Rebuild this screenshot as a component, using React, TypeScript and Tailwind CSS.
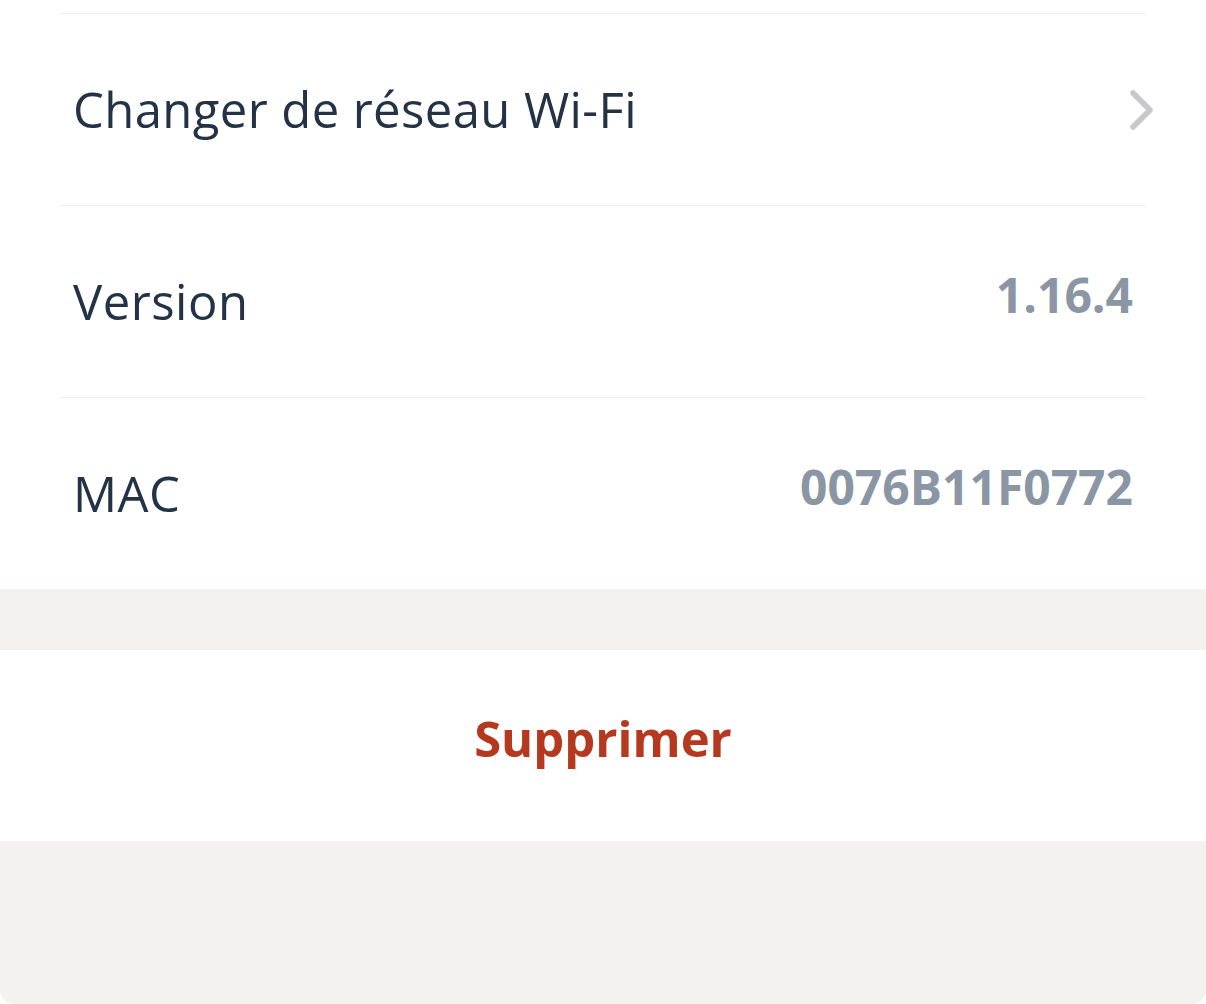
export default function App() {
  const rows = [
    { label: 'Version', value: '1.16.4' },
    { label: 'MAC', value: '0076B11F0772' },
  ]

  return (
    <div className="w-[1206px] h-[1004px] bg-white" style={{ fontFamily: '"Open Sans", "Noto Sans", sans-serif' }}>
      <div className="rounded-b-[14px] overflow-hidden bg-[#f3f2ee]">
        <div className="bg-white pt-[13px]">
          {/* Wi-Fi row */}
          <div className="mx-[60px] h-[192px] border-t border-[#f0f0f0] flex items-center justify-between pl-[13px]">
            <span className="text-[49px] text-[#233345] tracking-[0.4px]">Changer de réseau Wi-Fi</span>
            <svg width="26" height="42" viewBox="0 0 26 42" className="mr-[-9px]">
              <path d="M4 4 L21 21 L4 38" fill="none" stroke="#c8c8cb" strokeWidth="5.5" strokeLinecap="round" strokeLinejoin="round" />
            </svg>
          </div>

          {rows.map((r) => (
            <div key={r.label} className="mx-[60px] h-[192px] border-t border-[#f0f0f0] flex items-center justify-between pl-[13px] pr-[13px]">
              <span className="text-[49px] text-[#233345] tracking-[0.5px]">{r.label}</span>
              <span className="text-[48px] font-bold text-[#8a96a3] -mt-[14px]">{r.value}</span>
            </div>
          ))}
        </div>

        <div className="h-[61px]" />

        <div className="bg-white h-[191px] flex items-center justify-center pb-[14px]">
          <span className="text-[49px] font-bold text-[#b5391f]">Supprimer</span>
        </div>

        <div className="h-[163px]" />
      </div>
    </div>
  )
}
